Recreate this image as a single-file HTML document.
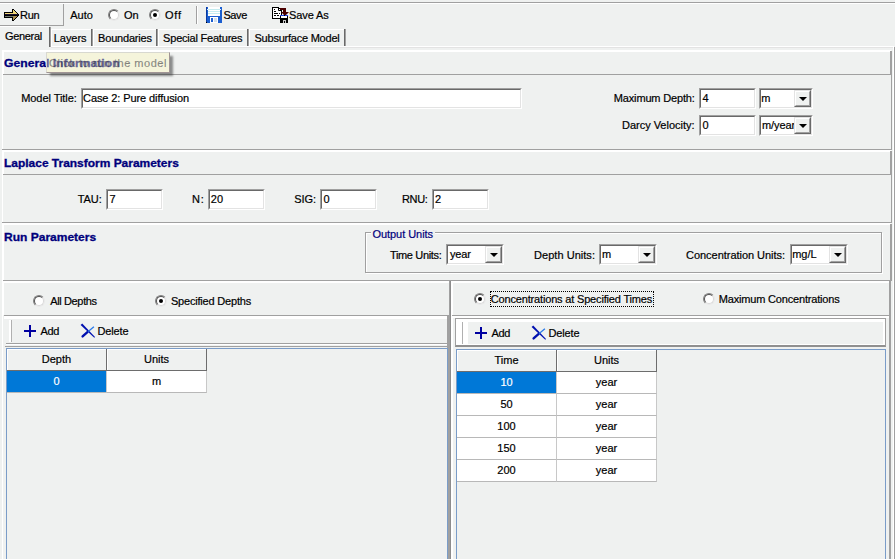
<!DOCTYPE html>
<html lang="en">
<head>
<meta charset="utf-8">
<title>Model</title>
<style>
html,body{margin:0;padding:0}
body{width:895px;height:559px;overflow:hidden;background:#eff1f0;position:relative;font:11px/13px 'Liberation Sans',sans-serif;color:#000}
#app{position:absolute;left:0;top:0;width:895px;height:559px;overflow:hidden;background:#eff1f0}
#app div,#app span,#app svg{position:absolute;box-sizing:border-box}
.t{white-space:nowrap;font:11px/13px 'Liberation Sans',sans-serif;-webkit-text-stroke:0.2px}
.h{height:1px;left:0}
.v{width:1px;top:0}
.g{background:#a0a0a0}
.d{background:#696969}
.w{background:#fff}
.edit{background:#fff;border:1px solid;border-color:#a0a0a0 #fff #fff #a0a0a0;height:21px}
.edit:before{content:"";position:absolute;left:0;top:0;right:0;bottom:0;border:1px solid;border-color:#696969 #e3e3e3 #e3e3e3 #696969}
.cbtn{background:#eff1f0;width:17px;height:17px;top:1px;right:1px;border:1px solid;border-color:#e3e3e3 #696969 #696969 #e3e3e3}
.cbtn:before{content:"";position:absolute;left:0;top:0;right:0;bottom:0;border:1px solid;border-color:#fff #a0a0a0 #a0a0a0 #fff}
.cbtn:after{content:"";position:absolute;left:4px;top:6px;width:0;height:0;border:4px solid transparent;border-top:4px solid #000;border-bottom:0}
.radio{width:12px;height:12px;border-radius:50%;background:#fff;border:1px solid;border-color:#808080 #e8e8e8 #e8e8e8 #808080;transform:rotate(0deg)}
.radio:before{content:"";position:absolute;left:0;top:0;width:10px;height:10px;border-radius:50%;border:1px solid;border-color:#505050 #d8d8d8 #d8d8d8 #505050;box-sizing:border-box}
.radio.on:after{content:"";position:absolute;left:3px;top:3px;width:4px;height:4px;border-radius:50%;background:#000}
.cell{background:#fff;border-right:1px solid #c8c8c8;border-bottom:1px solid #b8b8b8;text-align:center;font:11px/21px 'Liberation Sans',sans-serif;-webkit-text-stroke:0.2px;height:22px;width:100px}
.hd{background:#eff1f0;border-color:#6d6d6d;box-shadow:inset 1px 1px 0 #fff}
.sel{background:#0078d7;color:#fff}

</style>
</head>
<body>
<div id="app">
<!-- top toolbar -->
<div class="h g" style="top:2px;width:895px"></div>
<div class="h w" style="top:3px;width:895px"></div>
<div class="h g" style="top:25px;width:64px"></div>
<div class="v g" style="left:63px;top:4px;height:22px"></div>
<svg style="left:4px;top:9px" width="15" height="12" viewBox="0 0 15 12" shape-rendering="crispEdges"><rect x="8" y="0" width="2" height="1" fill="#000"/><rect x="8" y="1" width="1" height="1" fill="#000"/><rect x="9" y="1" width="1" height="1" fill="#f2d878"/><rect x="10" y="1" width="1" height="1" fill="#000"/><rect x="8" y="2" width="1" height="1" fill="#000"/><rect x="9" y="2" width="2" height="1" fill="#f2d878"/><rect x="11" y="2" width="1" height="1" fill="#000"/><rect x="0" y="3" width="9" height="1" fill="#000"/><rect x="9" y="3" width="3" height="1" fill="#f2d878"/><rect x="12" y="3" width="1" height="1" fill="#000"/><rect x="0" y="4" width="1" height="1" fill="#000"/><rect x="1" y="4" width="12" height="1" fill="#f2d878"/><rect x="13" y="4" width="1" height="1" fill="#000"/><rect x="0" y="5" width="1" height="1" fill="#000"/><rect x="1" y="5" width="13" height="1" fill="#1a1030"/><rect x="14" y="5" width="1" height="1" fill="#000"/><rect x="0" y="6" width="1" height="1" fill="#000"/><rect x="1" y="6" width="13" height="1" fill="#000"/><rect x="14" y="6" width="1" height="1" fill="#000"/><rect x="0" y="7" width="1" height="1" fill="#000"/><rect x="1" y="7" width="8" height="1" fill="#707a70"/><rect x="9" y="7" width="4" height="1" fill="#a88c50"/><rect x="13" y="7" width="1" height="1" fill="#000"/><rect x="0" y="8" width="9" height="1" fill="#000"/><rect x="9" y="8" width="3" height="1" fill="#a88c50"/><rect x="12" y="8" width="1" height="1" fill="#000"/><rect x="8" y="9" width="1" height="1" fill="#000"/><rect x="9" y="9" width="2" height="1" fill="#a88c50"/><rect x="11" y="9" width="1" height="1" fill="#000"/><rect x="8" y="10" width="1" height="1" fill="#000"/><rect x="9" y="10" width="1" height="1" fill="#a88c50"/><rect x="10" y="10" width="1" height="1" fill="#000"/><rect x="8" y="11" width="2" height="1" fill="#000"/></svg>
<div class="radio" style="left:108px;top:9px"></div>
<div class="radio on" style="left:149px;top:9px"></div>
<div class="v g" style="left:196px;top:6px;height:18px"></div>
<div class="v w" style="left:197px;top:6px;height:18px"></div>
<!-- save icon -->
<svg style="left:206px;top:7px" width="16" height="16" viewBox="0 0 16 16" shape-rendering="crispEdges"><path d="M0 0H16V16H1L0 15Z" fill="#1c5fd0"/><rect x="0" y="0" width="1" height="15" fill="#0a3aa0"/><rect x="2" y="0" width="12" height="9" fill="#fff"/><rect x="2" y="2" width="12" height="1" fill="#c4ecf0"/><rect x="2" y="4" width="12" height="1" fill="#c4ecf0"/><rect x="2" y="6" width="12" height="1" fill="#c4ecf0"/><rect x="1" y="2" width="1" height="1" fill="#e8f0ff"/><rect x="14" y="2" width="1" height="1" fill="#e8f0ff"/><rect x="4" y="10" width="8" height="6" fill="#fff"/><rect x="5" y="11" width="2" height="4" fill="#1c5fd0"/><rect x="8" y="11" width="3" height="4" fill="#d4e0ec"/><rect x="0" y="15" width="1" height="1" fill="#000"/></svg>
<!-- save as icon -->
<svg style="left:272px;top:7px" width="17" height="16" viewBox="0 0 17 16"><path d="M0.5 0.5H6.5L9.5 3.5V11.5H0.5Z" fill="#fff" stroke="#000" shape-rendering="crispEdges"/><path d="M6.5 0.5V3.5H9.5" fill="none" stroke="#000"/><path d="M2 2.5H3M2 4.5H4M2 6.5H6M7 6.5H8M2 8.5H4M5 8.5H7" stroke="#000"/><path d="M8 1H14V5H17L13 9L9 5H11V3H8Z" fill="#4a0000"/><rect x="8" y="8" width="8" height="8" fill="#000"/><rect x="8" y="8" width="4" height="1" fill="#2040e0"/><rect x="13" y="8" width="3" height="1" fill="#2040e0"/><rect x="9" y="9" width="6" height="2" fill="#fff"/><rect x="11" y="13" width="3" height="3" fill="#c8c8c8"/><rect x="12" y="14" width="1" height="2" fill="#000"/></svg>

<!-- tabs -->
<div class="v d" style="left:49px;top:27px;height:20px"></div>
<div class="v g" style="left:50px;top:27px;height:20px"></div>
<div class="h w" style="left:51px;top:46px;width:843px"></div>
<div class="h" style="left:51px;top:47px;width:842px;background:#e3e3e3"></div>
<div class="h w" style="left:0;top:26px;width:49px"></div>
<div class="h w" style="left:52px;top:29px;width:39px"></div>
<div class="v w" style="left:51px;top:29px;height:17px"></div>
<div class="v d" style="left:91px;top:29px;height:17px"></div>
<div class="v g" style="left:92px;top:29px;height:17px"></div>
<div class="h w" style="left:94px;top:29px;width:62px"></div>
<div class="v w" style="left:93px;top:29px;height:17px"></div>
<div class="v d" style="left:156px;top:29px;height:17px"></div>
<div class="v g" style="left:157px;top:29px;height:17px"></div>
<div class="h w" style="left:159px;top:29px;width:88px"></div>
<div class="v w" style="left:158px;top:29px;height:17px"></div>
<div class="v d" style="left:247px;top:29px;height:17px"></div>
<div class="v g" style="left:248px;top:29px;height:17px"></div>
<div class="h w" style="left:250px;top:29px;width:94px"></div>
<div class="v w" style="left:249px;top:29px;height:17px"></div>
<div class="v d" style="left:344px;top:29px;height:17px"></div>
<div class="v g" style="left:345px;top:29px;height:17px"></div>

<!-- tab page frame -->
<div class="v w" style="left:2px;top:50px;height:509px"></div>
<div class="v w" style="left:893px;top:46px;height:513px"></div>
<div class="v g" style="left:894px;top:47px;height:512px"></div>

<!-- section headers / bodies -->
<div class="h w" style="left:2px;top:50px;width:889px;height:2px"></div>
<div class="v w" style="left:3px;top:50px;height:24px"></div>
<div class="h g" style="left:3px;top:74px;width:888px"></div>
<div class="v g" style="left:890px;top:51px;height:24px;width:2px"></div>
<div class="v g" style="left:891px;top:75px;height:75px"></div>
<div class="h g" style="left:2px;top:149px;width:890px"></div>

<div class="h w" style="left:2px;top:150px;width:889px;height:2px"></div>
<div class="v w" style="left:3px;top:150px;height:24px"></div>
<div class="h g" style="left:3px;top:174px;width:888px"></div>
<div class="v g" style="left:890px;top:151px;height:24px;width:2px"></div>
<div class="v g" style="left:891px;top:175px;height:48px"></div>
<div class="h g" style="left:2px;top:222px;width:890px"></div>

<div class="h w" style="left:2px;top:223px;width:889px;height:2px"></div>
<div class="v w" style="left:3px;top:223px;height:57px"></div>
<div class="h g" style="left:3px;top:280px;width:888px"></div>
<div class="v g" style="left:890px;top:224px;height:57px;width:2px"></div>

<!-- section 1 controls -->
<div class="edit" style="left:81px;top:88px;width:441px"></div>
<div class="edit" style="left:699px;top:88px;width:57px"></div>
<div class="edit" style="left:759px;top:88px;width:54px"><div class="cbtn"></div></div>
<div class="edit" style="left:699px;top:115px;width:57px"></div>
<div class="edit" style="left:759px;top:115px;width:54px;overflow:hidden"><span class="t" style="left:2px;top:3px;letter-spacing:-0.1px">m/year</span><div class="cbtn"></div></div>

<!-- section 2 controls -->
<div class="edit" style="left:106px;top:189px;width:57px"></div>
<div class="edit" style="left:208px;top:189px;width:57px"></div>
<div class="edit" style="left:320px;top:189px;width:57px"></div>
<div class="edit" style="left:432px;top:189px;width:57px"></div>

<!-- output units group -->
<div style="left:366px;top:233px;width:517px;height:41px;border:1px solid #fff"></div><div style="left:365px;top:232px;width:517px;height:41px;border:1px solid #a0a0a0"></div>
<div style="left:371px;top:228px;width:64px;height:12px;background:#eff1f0"></div>
<div class="edit" style="left:446px;top:244px;width:58px"><div class="cbtn"></div></div>
<div class="edit" style="left:599px;top:244px;width:58px"><div class="cbtn"></div></div>
<div class="edit" style="left:790px;top:244px;width:58px"><div class="cbtn"></div></div>

<!-- bottom panels -->
<div class="h w" style="left:2px;top:281px;width:447px;height:2px"></div>
<div class="v w" style="left:3px;top:281px;height:34px"></div>
<div class="v g" style="left:449px;top:281px;height:278px"></div>
<div class="v g" style="left:450px;top:281px;height:278px;background:#8c8c8c"></div>
<div class="v w" style="left:451px;top:281px;height:278px;width:2px"></div>
<div class="h w" style="left:451px;top:281px;width:439px;height:2px"></div>
<div class="v g" style="left:889px;top:281px;height:278px;width:2px"></div>
<div class="h g" style="left:4px;top:315px;width:445px"></div>
<div class="h g" style="left:452px;top:315px;width:438px"></div>
<div class="h w" style="left:4px;top:316px;width:443px;height:3px"></div>
<div class="h w" style="left:453px;top:316px;width:436px;height:2px"></div>
<div class="v g" style="left:447px;top:316px;height:243px;width:2px"></div>

<!-- left toolbar -->
<div class="v w" style="left:9px;top:320px;height:22px;width:2px"></div>
<div class="v" style="left:11px;top:320px;height:22px;background:#b0b0b0"></div>
<div class="h g" style="left:6px;top:343px;width:441px"></div>
<div class="h w" style="left:6px;top:344px;width:441px"></div>
<div class="h g" style="left:5px;top:346px;width:442px"></div>
<svg style="left:24px;top:325px" width="12" height="12"><path d="M5 0H7V5H12V7H7V12H5V7H0V5H5Z" fill="#0000a0"/></svg>
<svg style="left:80px;top:323px" width="16" height="16" viewBox="0 0 16 16"><path d="M0.6 2L2.2 0.6L15 14.1L14.3 14.8Z" fill="#0010b0"/><path d="M13.9 3.7L7 9.6" stroke="#2a7ae8" stroke-width="1.3"/><path d="M7.4 9.2L2.6 13.4" stroke="#0010b0" stroke-width="2.4" stroke-linecap="round"/></svg>

<!-- right toolbar -->
<div style="left:455px;top:318px;width:431px;height:29px;background:#fff;border:1px solid #a0a0a0;border-bottom:2px solid #909090"></div>
<div style="left:468px;top:322px;width:415px;height:22px;background:#eff1f0"></div>
<div class="v" style="left:462px;top:322px;height:22px;background:#b0b0b0"></div>
<svg style="left:475px;top:327px" width="12" height="12"><path d="M5 0H7V5H12V7H7V12H5V7H0V5H5Z" fill="#0000a0"/></svg>
<svg style="left:531px;top:325px" width="16" height="16" viewBox="0 0 16 16"><path d="M0.6 2L2.2 0.6L15 14.1L14.3 14.8Z" fill="#0010b0"/><path d="M13.9 3.7L7 9.6" stroke="#2a7ae8" stroke-width="1.3"/><path d="M7.4 9.2L2.6 13.4" stroke="#0010b0" stroke-width="2.4" stroke-linecap="round"/></svg>

<!-- radios -->
<div class="radio" style="left:33px;top:295px"></div>
<div class="radio on" style="left:155px;top:295px"></div>
<div class="radio on" style="left:474px;top:293px"></div>
<div class="radio" style="left:703px;top:293px"></div>
<div style="left:490px;top:291px;width:164px;height:16px;border:1px dotted #000"></div>

<!-- left grid -->
<div style="left:6px;top:348px;width:442px;height:215px;border:1px solid #7a9cc8;background:#eff1f0">
 <div class="cell hd" style="left:0;top:0">Depth</div><div class="cell hd" style="left:100px;top:0">Units</div>
 <div class="cell sel" style="left:0;top:22px">0</div><div class="cell" style="left:100px;top:22px">m</div>
</div>
<!-- right grid -->
<div style="left:456px;top:349px;width:430px;height:215px;border:1px solid #7a9cc8;background:#eff1f0">
 <div class="cell hd" style="left:0;top:0">Time</div><div class="cell hd" style="left:100px;top:0">Units</div>
 <div class="cell sel" style="left:0;top:22px">10</div><div class="cell" style="left:100px;top:22px">year</div>
 <div class="cell" style="left:0;top:44px">50</div><div class="cell" style="left:100px;top:44px">year</div>
 <div class="cell" style="left:0;top:66px">100</div><div class="cell" style="left:100px;top:66px">year</div>
 <div class="cell" style="left:0;top:88px">150</div><div class="cell" style="left:100px;top:88px">year</div>
 <div class="cell" style="left:0;top:110px">200</div><div class="cell" style="left:100px;top:110px">year</div>
</div>

<span class="t" style="left:4.3px;top:57px;transform:scaleX(1.106);transform-origin:0 0;font-weight:bold;color:#00007c;-webkit-text-stroke:0.3px #00007c;">General Information</span>
<!-- tooltip -->
<div style="left:46px;top:52px;width:124px;height:21px;background:rgba(255,251,187,.4);box-shadow:3px 3px 2px -0.5px rgba(40,40,40,.5);border:1px solid;border-color:#d8d8d0 #a09494 #a09494 #d8d8d0"></div>

<span class="t" style="left:20.0px;top:9px;letter-spacing:-0.25px;">Run</span>
<span class="t" style="left:70.2px;top:9px;letter-spacing:0.03px;">Auto</span>
<span class="t" style="left:124.0px;top:9px;">On</span>
<span class="t" style="left:165.0px;top:9px;letter-spacing:0.8px;">Off</span>
<span class="t" style="left:223.4px;top:9px;letter-spacing:-0.4px;">Save</span>
<span class="t" style="left:289.1px;top:9px;letter-spacing:-0.1px;">Save As</span>
<span class="t" style="left:5.1px;top:30px;letter-spacing:-0.35px;">General</span>
<span class="t" style="left:53.8px;top:32px;letter-spacing:-0.06px;">Layers</span>
<span class="t" style="left:98.1px;top:32px;letter-spacing:-0.2px;">Boundaries</span>
<span class="t" style="left:163.1px;top:32px;letter-spacing:-0.21px;">Special Features</span>
<span class="t" style="left:254.5px;top:32px;letter-spacing:-0.23px;">Subsurface Model</span>
<span class="t" style="left:4.0px;top:157px;transform:scaleX(1.087);transform-origin:0 0;font-weight:bold;color:#00007c;-webkit-text-stroke:0.3px #00007c;">Laplace Transform Parameters</span>
<span class="t" style="left:4.0px;top:231px;transform:scaleX(1.092);transform-origin:0 0;font-weight:bold;color:#00007c;-webkit-text-stroke:0.3px #00007c;">Run Parameters</span>
<span class="t" style="left:21.2px;top:92px;letter-spacing:-0.05px;">Model Title:</span>
<span class="t" style="left:83.1px;top:92px;letter-spacing:-0.1px;">Case 2: Pure diffusion</span>
<span class="t" style="left:613.8px;top:92px;letter-spacing:-0.16px;">Maximum Depth:</span>
<span class="t" style="left:702.5px;top:92px;">4</span>
<span class="t" style="left:761.2px;top:92px;">m</span>
<span class="t" style="left:622.0px;top:119px;letter-spacing:-0.02px;">Darcy Velocity:</span>
<span class="t" style="left:702.5px;top:119px;">0</span>
<span class="t" style="left:77.7px;top:193px;letter-spacing:-0.03px;">TAU:</span>
<span class="t" style="left:109.5px;top:193px;">7</span>
<span class="t" style="left:191.9px;top:193px;letter-spacing:0.8px;">N:</span>
<span class="t" style="left:210.8px;top:193px;">20</span>
<span class="t" style="left:294.3px;top:193px;letter-spacing:-0.1px;">SIG:</span>
<span class="t" style="left:323.5px;top:193px;">0</span>
<span class="t" style="left:401.9px;top:193px;letter-spacing:-0.3px;">RNU:</span>
<span class="t" style="left:434.9px;top:193px;">2</span>
<span class="t" style="left:372.4px;top:228px;letter-spacing:-0.04px;color:#00007c;">Output Units</span>
<span class="t" style="left:390.0px;top:249px;letter-spacing:-0.35px;">Time Units:</span>
<span class="t" style="left:450.0px;top:248px;letter-spacing:-0.17px;">year</span>
<span class="t" style="left:534.0px;top:249px;letter-spacing:0.04px;">Depth Units:</span>
<span class="t" style="left:602.1px;top:248px;">m</span>
<span class="t" style="left:686.0px;top:249px;letter-spacing:-0.03px;">Concentration Units:</span>
<span class="t" style="left:792.2px;top:248px;">mg/L</span>
<span class="t" style="left:50.2px;top:295px;letter-spacing:-0.36px;">All Depths</span>
<span class="t" style="left:170.9px;top:295px;letter-spacing:-0.19px;">Specified Depths</span>
<span class="t" style="left:490.8px;top:293px;letter-spacing:-0.17px;">Concentrations at Specified Times</span>
<span class="t" style="left:718.8px;top:293px;letter-spacing:-0.18px;">Maximum Concentrations</span>
<span class="t" style="left:40.5px;top:325px;letter-spacing:-0.4px;">Add</span>
<span class="t" style="left:97.4px;top:325px;letter-spacing:-0.1px;">Delete</span>
<span class="t" style="left:491.5px;top:327px;letter-spacing:-0.4px;">Add</span>
<span class="t" style="left:548.4px;top:327px;letter-spacing:-0.1px;">Delete</span>
<span class="t" style="left:49.1px;top:57px;letter-spacing:0.52px;color:rgba(40,40,50,.5);">Click to run the model</span>
</div>

</body>
</html>
